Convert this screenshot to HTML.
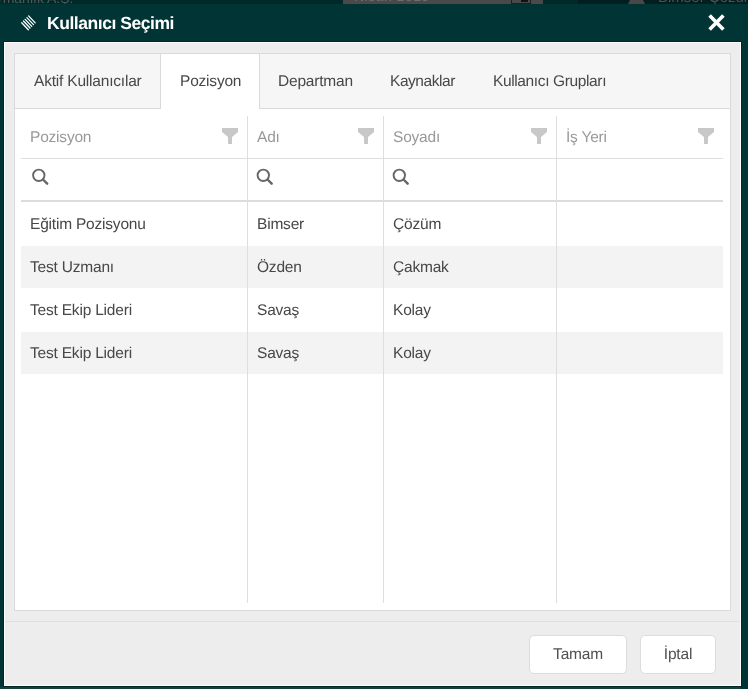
<!DOCTYPE html>
<html><head><meta charset="utf-8">
<style>
*{margin:0;padding:0;box-sizing:border-box}
html,body{width:748px;height:689px;overflow:hidden}
body{background:#013435;font-family:"Liberation Sans",sans-serif;position:relative}
#root{text-rendering:geometricPrecision;position:absolute;left:0;top:0;width:748px;height:689px;will-change:transform}
.abs{position:absolute}
.topstrip{left:0;top:0;width:748px;height:4px;background:#012929;overflow:hidden}
.title{left:47px;top:12.5px;letter-spacing:-0.45px;font-size:17.5px;font-weight:bold;color:#fff;white-space:nowrap;line-height:20px}
.body{left:4px;top:42px;width:737px;height:644px;background:#ededed;border:1px solid #fff;box-shadow:0 0 0 1px #012627}
.panel{left:14px;top:53px;width:717px;height:558px;border:1px solid #dadada;background:#fff}
.tabbar{left:15px;top:54px;width:715px;height:55px;background:#f6f6f6;border-bottom:1px solid #dadada}
.tab{position:absolute;top:0;font-size:15.5px;letter-spacing:-0.2px;color:#484848;white-space:nowrap;line-height:18px}
.activetab{left:160px;top:54px;width:100px;height:55px;background:#fff;border-left:1px solid #dadada;border-right:1px solid #dadada}
.hdr{font-size:15.5px;letter-spacing:-0.2px;color:#999;white-space:nowrap;line-height:18px}
.cell{font-size:15.5px;letter-spacing:-0.2px;color:#474747;white-space:nowrap;line-height:18px}
.vline{width:1px;background:#dedede;top:116px;height:487px}
.btn{top:635px;height:39px;background:#fff;border:1px solid #dcdcdc;border-radius:5px;font-size:15.5px;letter-spacing:-0.2px;color:#505050;text-align:center;line-height:37px}
</style></head><body><div id="root">
<div class="abs topstrip">
  <div class="abs" style="left:-2px;top:-9.5px;font-size:14px;color:#515855;white-space:nowrap;line-height:15px">rmanlık A.Ş.</div>
  <div class="abs" style="left:343px;top:0;width:200px;height:4px;background:#4a4949"></div>
  <div class="abs" style="left:354px;top:-11.2px;font-size:14px;color:#6e6e6e;white-space:nowrap;line-height:15px;letter-spacing:0.5px">Nisan 2019</div>
  <div class="abs" style="left:511px;top:0;width:20px;height:4px;border:1px solid #1e1e1e;border-top:none;background:#4a4949"></div>
  <div class="abs" style="left:521px;top:0;width:7px;height:2px;background:#111"></div>
  <div class="abs" style="left:578px;top:0;width:170px;height:4px;background:#031e1e"></div>
  <svg class="abs" style="left:620px;top:0" width="30" height="4"><path d="M10 0H23L25 4H8Z" fill="#474747"/></svg>
  <div class="abs" style="left:658px;top:-10px;font-size:15px;color:#4e5352;white-space:nowrap;line-height:15px">Bimser Çözüm</div>
</div>

<!-- title icon -->
<svg class="abs" style="left:0;top:0" width="60" height="42" viewBox="0 0 60 42">
  <g stroke="#fff" stroke-width="1.3" stroke-linecap="round">
    <line x1="28.60" y1="15.90" x2="35.20" y2="22.90"/>
    <line x1="26.88" y1="17.62" x2="33.48" y2="24.62"/>
    <line x1="25.16" y1="19.34" x2="31.76" y2="26.34"/>
    <line x1="23.44" y1="21.06" x2="30.04" y2="28.06"/>
    <line x1="21.72" y1="22.78" x2="28.32" y2="29.78"/>
  </g>
</svg>
<div class="abs title">Kullanıcı Seçimi</div>
<!-- close -->
<svg class="abs" style="left:700px;top:6px" width="34" height="34" viewBox="0 0 34 34">
  <g stroke="#fff" stroke-width="3.6" stroke-linecap="butt">
    <line x1="9.6" y1="9.6" x2="23.4" y2="23.4"/>
    <line x1="23.4" y1="9.6" x2="9.6" y2="23.4"/>
  </g>
</svg>

<div class="abs" style="left:0;top:687px;width:741px;height:2px;background:#133f3f"></div>
<div class="abs body"></div>
<div class="abs panel"></div>
<div class="abs tabbar"></div>
<div class="abs activetab"></div>

<div class="abs tab" style="left:34px;top:73px">Aktif Kullanıcılar</div>
<div class="abs tab" style="left:180px;top:73px">Pozisyon</div>
<div class="abs tab" style="left:278px;top:73px">Departman</div>
<div class="abs tab" style="left:390px;top:73px;letter-spacing:-0.45px">Kaynaklar</div>
<div class="abs tab" style="left:493px;top:73px;letter-spacing:-0.37px">Kullanıcı Grupları</div>

<!-- grid lines -->
<div class="abs" style="left:21px;top:158px;width:702px;height:1px;background:#dedede"></div>
<div class="abs" style="left:21px;top:200px;width:702px;height:2px;background:#dcdcdc"></div>
<div class="abs vline" style="left:247px"></div>
<div class="abs vline" style="left:383px"></div>
<div class="abs vline" style="left:556px"></div>

<!-- row shading -->
<div class="abs" style="left:21px;top:246px;width:702px;height:42px;background:#f3f3f3"></div>
<div class="abs" style="left:21px;top:332px;width:702px;height:42px;background:#f3f3f3"></div>
<div class="abs vline" style="left:247px"></div>
<div class="abs vline" style="left:383px"></div>
<div class="abs vline" style="left:556px"></div>


<!-- filter icons -->
<svg class="abs" style="left:0;top:0" width="748" height="200" viewBox="0 0 748 200">
  <g fill="#c8c8c8">
    <path d="M222 128H238V132L232 137V144H228V137L222 132Z"/>
    <path d="M358 128H374V132L368 137V144H364V137L358 132Z"/>
    <path d="M531 128H547V132L541 137V144H537V137L531 132Z"/>
    <path d="M698 128H714V132L708 137V144H704V137L698 132Z"/>
  </g>
  <g fill="none" stroke="#666" stroke-width="1.9">
    <circle cx="38.8" cy="175.3" r="5.7"/>
    <circle cx="263.3" cy="175.3" r="5.7"/>
    <circle cx="399.3" cy="175.3" r="5.7"/>
  </g>
  <g stroke="#666" stroke-width="2.4" stroke-linecap="round">
    <line x1="43" y1="179.5" x2="47.2" y2="183.7"/>
    <line x1="267.5" y1="179.5" x2="271.7" y2="183.7"/>
    <line x1="403.5" y1="179.5" x2="407.7" y2="183.7"/>
  </g>
</svg>

<!-- headers -->
<div class="abs hdr" style="left:30px;top:129px">Pozisyon</div>
<div class="abs hdr" style="left:257px;top:129px">Adı</div>
<div class="abs hdr" style="left:393px;top:129px">Soyadı</div>
<div class="abs hdr" style="left:566px;top:129px">İş Yeri</div>

<!-- rows -->
<div class="abs cell" style="left:30px;top:216px">Eğitim Pozisyonu</div>
<div class="abs cell" style="left:257px;top:216px">Bimser</div>
<div class="abs cell" style="left:393px;top:216px">Çözüm</div>
<div class="abs cell" style="left:30px;top:259px">Test Uzmanı</div>
<div class="abs cell" style="left:257px;top:259px">Özden</div>
<div class="abs cell" style="left:393px;top:259px">Çakmak</div>
<div class="abs cell" style="left:30px;top:302px">Test Ekip Lideri</div>
<div class="abs cell" style="left:257px;top:302px">Savaş</div>
<div class="abs cell" style="left:393px;top:302px">Kolay</div>
<div class="abs cell" style="left:30px;top:345px">Test Ekip Lideri</div>
<div class="abs cell" style="left:257px;top:345px">Savaş</div>
<div class="abs cell" style="left:393px;top:345px">Kolay</div>

<!-- footer -->
<div class="abs" style="left:5px;top:621px;width:735px;height:1px;background:#dfdfdf"></div>
<div class="abs btn" style="left:529px;width:98px">Tamam</div>
<div class="abs btn" style="left:640px;width:76px">İptal</div>
</div></body></html>
